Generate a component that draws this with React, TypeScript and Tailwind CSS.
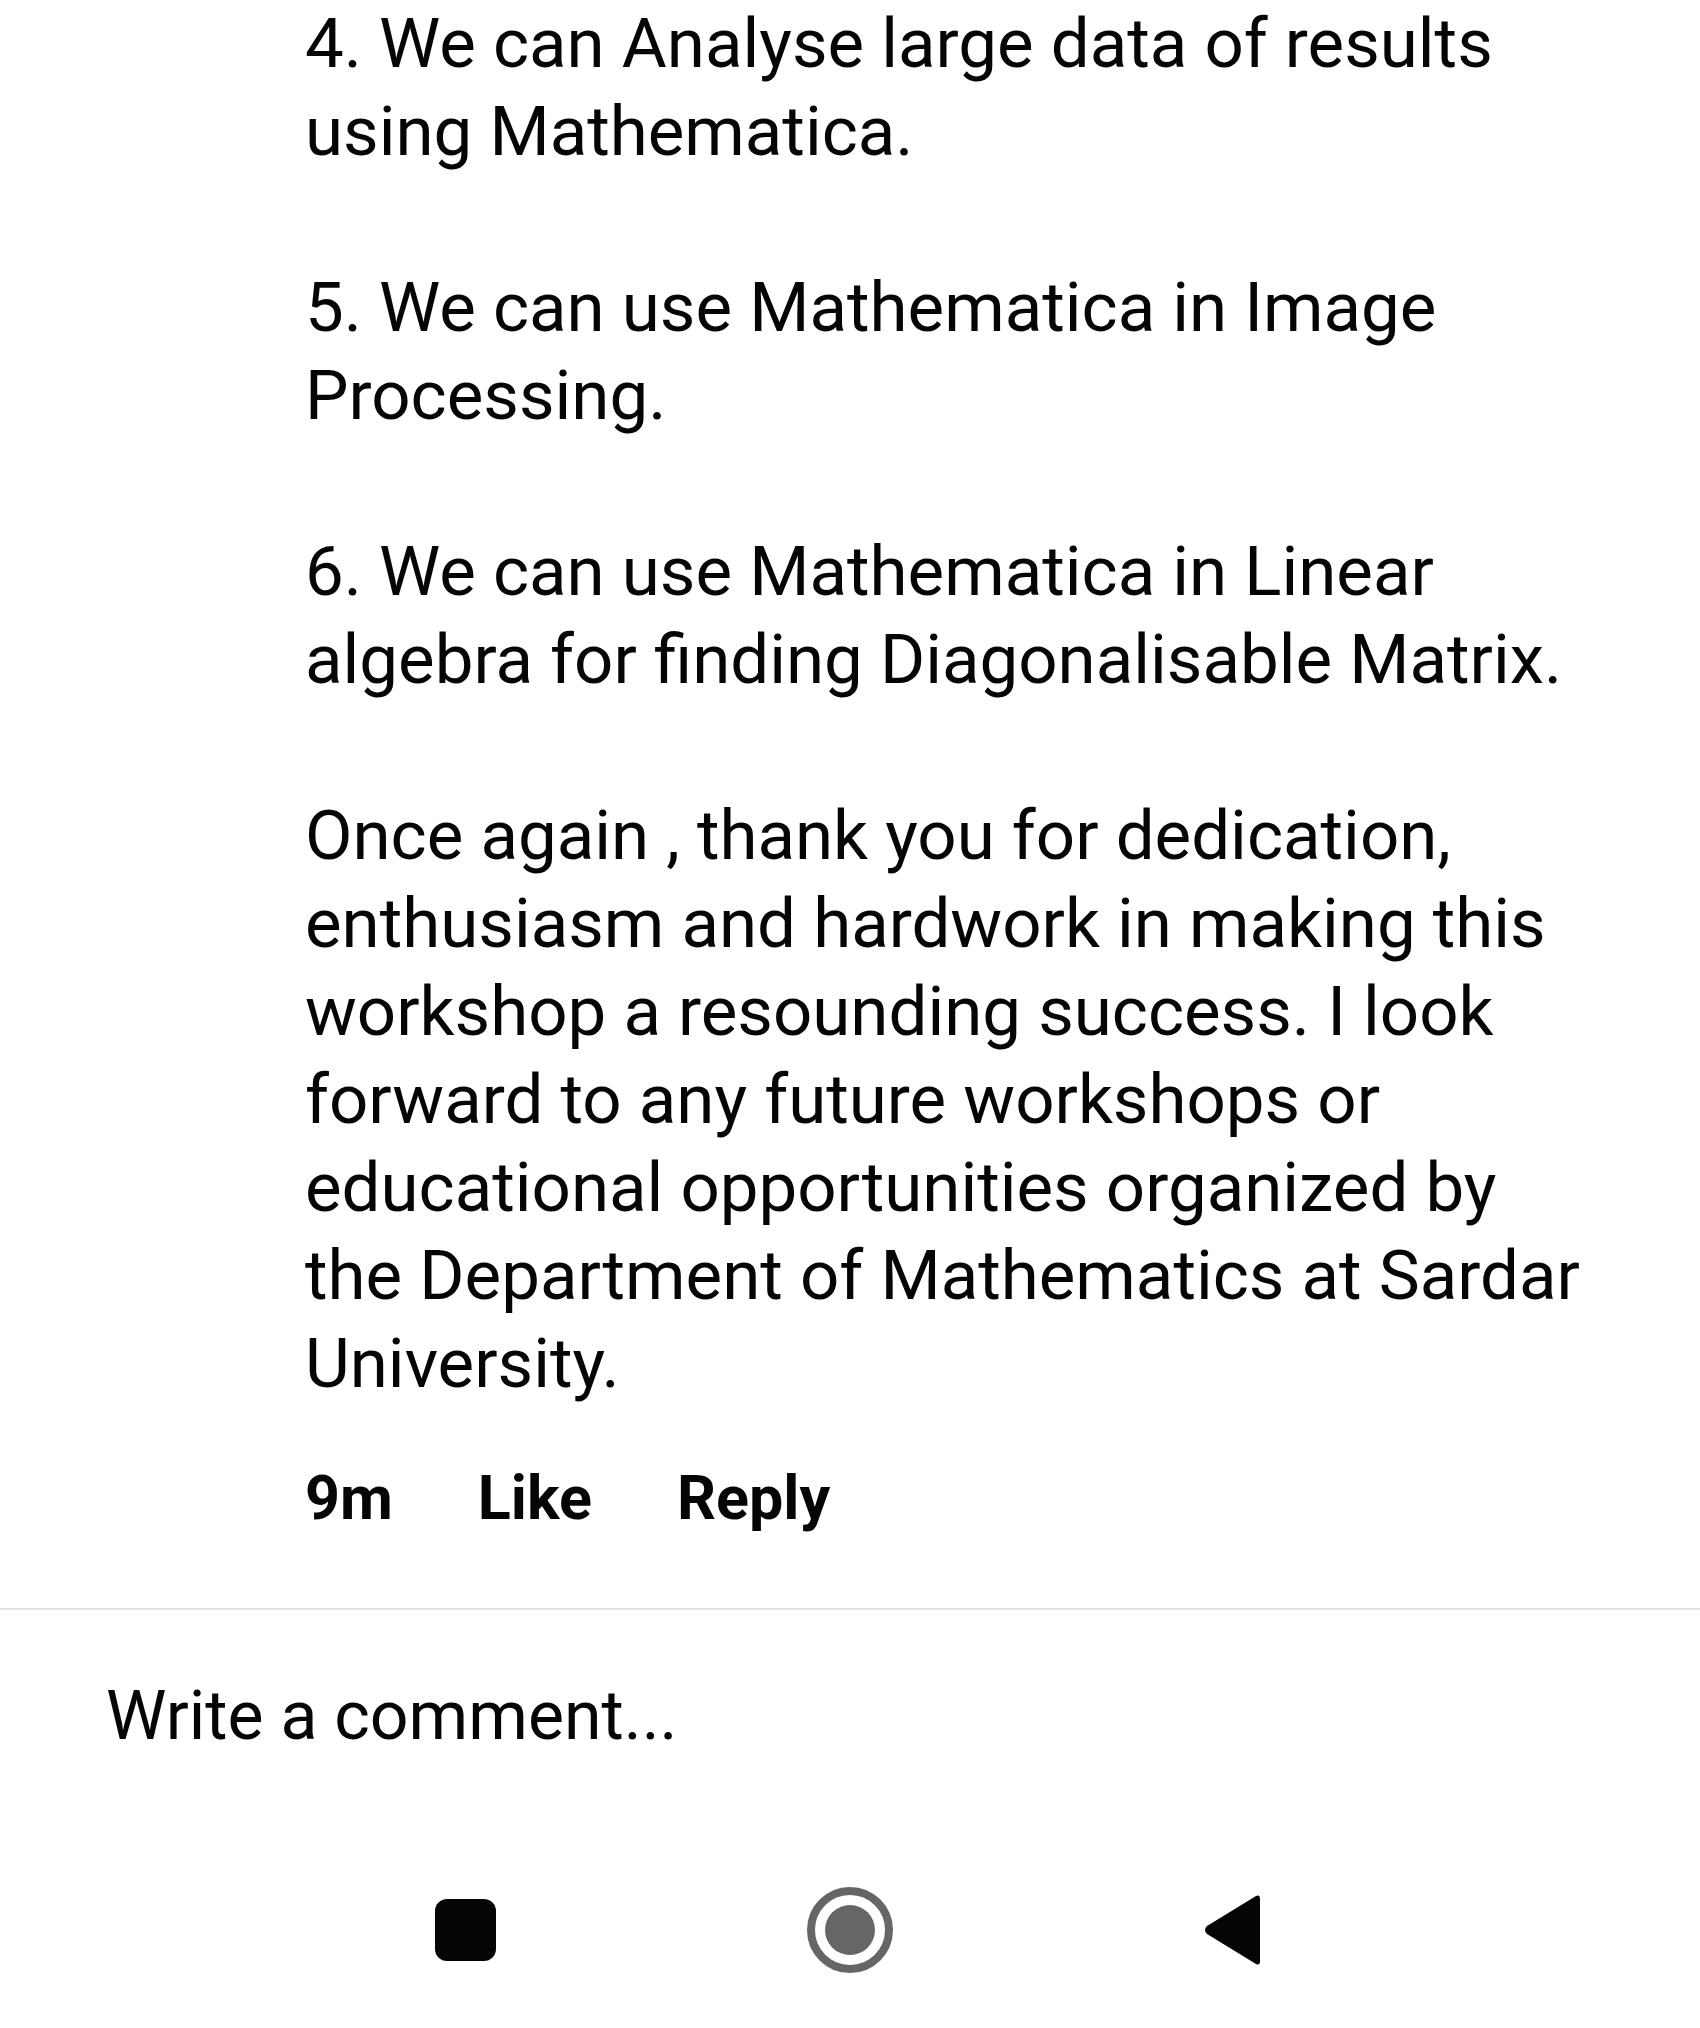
import React from 'react'

// Comment thread tail: body text, actions, composer and the Android nav bar

const paragraphs: string[][] = [
  ['4. We can Analyse large data of results', 'using Mathematica.'],
  ['5. We can use Mathematica in Image', 'Processing.'],
  ['6. We can use Mathematica in Linear', 'algebra for finding Diagonalisable Matrix.'],
  [
    'Once again , thank you for dedication,',
    'enthusiasm and hardwork in making this',
    'workshop a resounding success. I look',
    'forward to any future workshops or',
    'educational opportunities organized by',
    'the Department of Mathematics at Sardar',
    'University.',
  ],
]

function NavBar() {
  return (
    <div className="flex items-center h-[130px] mt-[105px]">
      <div className="w-[435px]" />
      <div className="w-[61px] h-[62px] rounded-[12px] bg-[#050505]" />
      <div className="w-[311px]" />
      <div className="w-[86px] h-[86px] rounded-full border-[8px] border-[#666666] flex items-center justify-center">
        <div className="w-[50px] h-[50px] rounded-full bg-[#666666]" />
      </div>
      <div className="w-[310px]" />
      <svg width="58" height="72" viewBox="0 0 58 72">
        <path d="M53 2 Q57 0 57 5 L57 67 Q57 72 53 70 L4 40 Q0 36 4 32 Z" fill="#050505" />
      </svg>
    </div>
  )
}

export default function App() {
  return (
    <div className="w-[1700px] h-[2028px] bg-white text-[#050505] overflow-hidden" style={{ fontFamily: 'Roboto, "Liberation Sans", sans-serif' }}>
      <div className="pl-[305px] text-[69px] leading-[88px] whitespace-nowrap">
        {paragraphs.map((lines, i) => (
          <div key={i} className={i > 0 ? 'mt-[88px]' : ''}>
            {lines.map((l) => (
              <div key={l}>{l}</div>
            ))}
          </div>
        ))}
      </div>

      <div className="pl-[305px] mt-[46px] flex items-center gap-[85px] text-[61px] font-bold leading-[88px]">
        <span>9m</span>
        <span>Like</span>
        <span>Reply</span>
      </div>

      <div className="mt-[66px] h-[2px] bg-[#e2e2e2]" />

      <div className="pl-[106px] mt-[62px] text-[68px] leading-[88px]">Write a comment...</div>

      <NavBar />
    </div>
  )
}
